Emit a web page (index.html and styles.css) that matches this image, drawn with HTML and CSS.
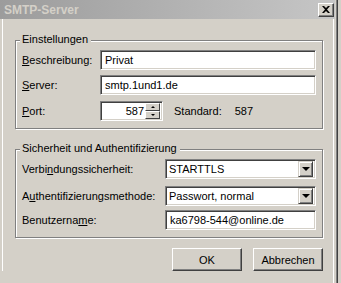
FILE: index.html
```html
<!DOCTYPE html>
<html lang="de">
    <head>
        <meta charset="UTF-8">
        <title>SMTP-Server</title>
        <link rel="stylesheet" href="styles.css">
    </head>
    <body>
        <div class="window">
            <div class="titlebar">
                <span class="title">SMTP-Server</span>
                <span class="close">
                    <svg width="8" height="7" viewBox="0 0 8 7"><path d="M0 0h2l2 2 2-2h2L5 3.5 8 7H6L4 5 2 7H0l3-3.5z" fill="#000"/></svg>
                </span>
            </div>
            <div class="client">
                <div class="group">
                    <div class="group-title">Einstellungen</div>
                    <div class="row">
                        <label class="label"><u>B</u>eschreibung:</label>
                        <div class="edit wide">Privat</div>
                    </div>
                    <div class="row">
                        <label class="label"><u>S</u>erver:</label>
                        <div class="edit wide">smtp.1und1.de</div>
                    </div>
                    <div class="row port-row">
                        <label class="label"><u>P</u>ort:</label>
                        <div class="edit port">
                            <span class="port-value">587</span>
                            <span class="spin">
                                <span class="spin-btn"><i class="tri up"></i></span>
                                <span class="spin-btn"><i class="tri down"></i></span>
                            </span>
                        </div>
                        <span class="default-label">Standard:</span>
                        <span class="default-value">587</span>
                    </div>
                </div>

                <div class="group security">
                    <div class="group-title">Sicherheit und Authentifizierung</div>
                    <div class="row">
                        <label class="label">Verbi<u>n</u>dungssicherheit:</label>
                        <div class="combo">
                            <span class="combo-text">STARTTLS</span>
                            <span class="combo-btn"><i class="arrow"></i></span>
                        </div>
                    </div>
                    <div class="row auth-row">
                        <label class="label">A<u>u</u>thentifizierungsmethode:</label>
                        <div class="combo">
                            <span class="combo-text">Passwort, normal</span>
                            <span class="combo-btn"><i class="arrow"></i></span>
                        </div>
                    </div>
                    <div class="row user-row">
                        <label class="label">Benutzerna<u>m</u>e:</label>
                        <div class="edit user">ka6798-544@online.de</div>
                    </div>
                </div>

                <div class="buttons">
                    <button class="btn default">OK</button>
                    <button class="btn">Abbrechen</button>
                </div>
            </div>
        </div>
    </body>
</html>
```

FILE: styles.css
```css
* {
    box-sizing: border-box;
}

body {
    margin: 0;
    background: #d4d0c8;
    font-family: "Liberation Sans", Arial, sans-serif;
    font-size: 11px;
    color: #000;
}

.window {
    width: 338px;
    height: 283px;
    border-right: 1px solid #404040;
    box-shadow: inset -1px 0 0 #808080, inset -3px 0 0 #d4d0c8, inset -4px 0 0 #fff;
}

.titlebar {
    height: 19px;
    width: 335px;
    display: flex;
    align-items: center;
    justify-content: space-between;
    padding: 0 1px 0 4px;
    background: linear-gradient(to right, #9c9c9c, #c6c6c6);
}

.title {
    font-weight: bold;
    font-size: 12px;
    color: #d4d0c8;
}

.close {
    width: 16px;
    height: 14px;
    display: flex;
    align-items: center;
    justify-content: center;
    background: #d4d0c8;
    border: 1px solid;
    border-color: #fff #404040 #404040 #fff;
    box-shadow: inset -1px -1px 0 #808080;
}

.client {
    margin-left: 2px;
    border-left: 1px solid #fff;
    padding: 21px 0 0 12px;
}

.group {
    width: 308px;
    border: 1px solid #808080;
    box-shadow: inset 1px 1px 0 #fff, 1px 1px 0 #fff;
    padding: 0 5px 7px 6px;
}

.group-title {
    display: table;
    margin: -8px 0 0 -2px;
    padding: 0 3px 0 2px;
    line-height: 13px;
    background: #d4d0c8;
}

.security {
    margin-top: 20px;
}

.row {
    display: flex;
    align-items: center;
    height: 20px;
    margin-top: 5px;
}

.group-title + .row {
    margin-top: 4px;
}

.port-row {
    margin-top: 6px;
}

.auth-row {
    margin-top: 7px;
}

.user-row {
    margin-top: 4px;
}

.label {
    width: 78px;
    flex-shrink: 0;
}

.security .label {
    width: 143px;
}

.edit {
    height: 20px;
    background: #fff;
    border: 1px solid;
    border-color: #808080 #fff #fff #808080;
    box-shadow: inset 1px 1px 0 #404040, inset -1px -1px 0 #d4d0c8;
    padding: 0 4px;
    display: flex;
    align-items: center;
    white-space: nowrap;
}

.wide {
    width: 216px;
}

.user {
    width: 151px;
}

.port {
    width: 63px;
    padding: 0 2px 0 4px;
    justify-content: flex-end;
}

.port-value {
    margin-right: 1px;
}

.spin {
    display: flex;
    flex-direction: column;
    width: 15px;
    height: 16px;
}

.spin-btn {
    flex: 1;
    display: flex;
    align-items: center;
    justify-content: center;
    background: #d4d0c8;
    border: 1px solid;
    border-color: #fff #404040 #404040 #fff;
}

.tri {
    width: 0;
    height: 0;
    border-left: 2px solid transparent;
    border-right: 2px solid transparent;
}

.tri.up {
    border-bottom: 2px solid #000;
}

.tri.down {
    border-top: 2px solid #000;
}

.default-label {
    margin-left: 11px;
}

.default-value {
    margin-left: 13px;
}

.combo {
    width: 151px;
    height: 20px;
    background: #fff;
    border: 1px solid;
    border-color: #808080 #fff #fff #808080;
    box-shadow: inset 1px 1px 0 #404040, inset -1px -1px 0 #d4d0c8;
    padding: 2px 2px 2px 3px;
    display: flex;
    align-items: center;
    justify-content: space-between;
}

.combo-btn {
    width: 15px;
    height: 16px;
    display: flex;
    align-items: center;
    justify-content: center;
    background: #d4d0c8;
    border: 1px solid;
    border-color: #d4d0c8 #404040 #404040 #d4d0c8;
    box-shadow: inset 1px 1px 0 #fff, inset -1px -1px 0 #808080;
}

.arrow {
    width: 0;
    height: 0;
    border-left: 4px solid transparent;
    border-right: 4px solid transparent;
    border-top: 4px solid #000;
}

.buttons {
    display: flex;
    justify-content: flex-end;
    gap: 11px;
    width: 308px;
    margin-top: 10px;
}

.btn {
    width: 70px;
    height: 23px;
    padding: 0;
    font: inherit;
    color: #000;
    background: #d4d0c8;
    border: 1px solid;
    border-color: #fff #404040 #404040 #fff;
    box-shadow: inset -1px -1px 0 #808080;
}
```
